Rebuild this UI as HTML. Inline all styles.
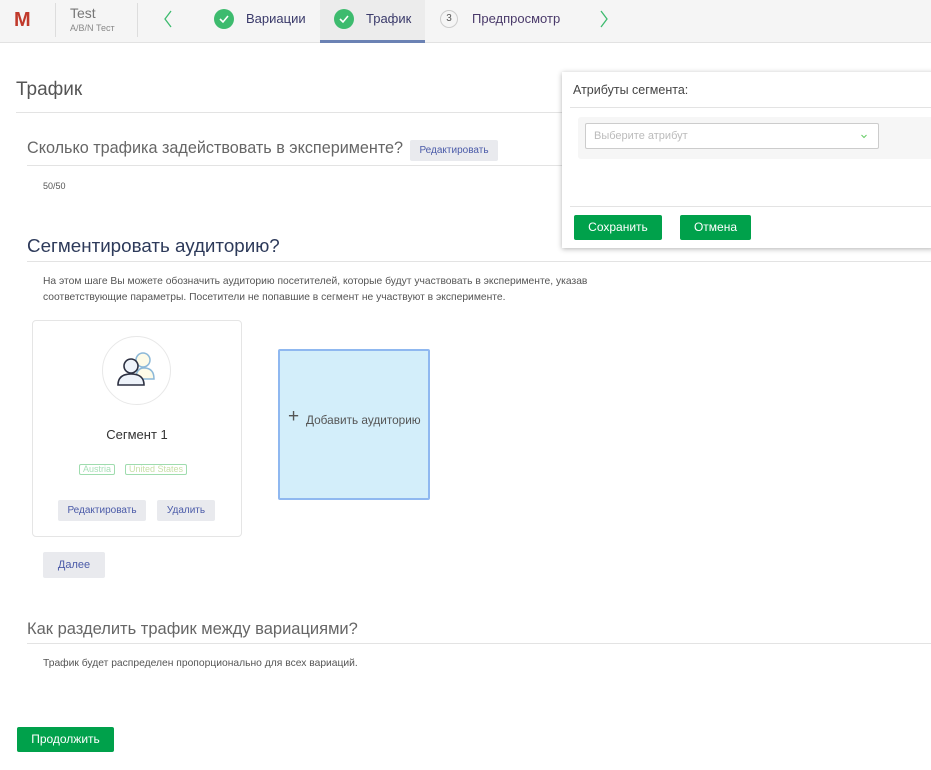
<!DOCTYPE html>
<html><head><meta charset="utf-8"><style>
*{box-sizing:border-box;margin:0;padding:0}
body{width:931px;height:770px;overflow:hidden;background:#fff;font-family:"Liberation Sans",sans-serif;color:#333;position:relative}
.a{position:absolute;white-space:nowrap}
.hdr{position:absolute;left:0;top:0;width:931px;height:43px;background:#f5f5f5;border-bottom:1px solid #e2e2e2}
.chk{position:absolute;width:20px;height:20px;border-radius:50%;background:#3dbb6e;top:9px}
.btn{position:absolute;background:#e9eaee;color:#4a5aa8;font-size:10px;text-align:center;border-radius:2px}
.g{position:absolute;background:#00a14b;color:#fff;font-size:12px;text-align:center;border-radius:2px}
.line{position:absolute;height:1px;background:#e3e3e3}
</style></head><body>
<div class="hdr">
 <div class="a" style="left:14px;top:9px;font-size:20px;font-weight:bold;color:#c0392b">M</div>
 <div class="a" style="left:55px;top:3px;width:1px;height:34px;background:#ddd"></div>
 <div class="a" style="left:70px;top:5px;font-size:14px;color:#777">Test</div>
 <div class="a" style="left:70px;top:23px;font-size:9px;color:#888">A/B/N Тест</div>
 <div class="a" style="left:137px;top:3px;width:1px;height:34px;background:#ddd"></div>
 <svg class="a" style="left:162px;top:9px" width="12" height="20"><path d="M9 2 L3 10 L9 18" stroke="#3dbb6e" stroke-width="1.3" fill="none"/></svg>
 <div class="chk" style="left:214px"><svg width="20" height="20"><path d="M6 10 L9 13 L14 7" stroke="#fff" stroke-width="1.6" fill="none"/></svg></div>
 <div class="a" style="left:246px;top:11px;font-size:13px;color:#3a3a6a">Вариации</div>
 <div class="a" style="left:320px;top:0;width:105px;height:43px;background:#ececec;border-bottom:3px solid #6b82b4"></div>
 <div class="chk" style="left:334px"><svg width="20" height="20"><path d="M6 10 L9 13 L14 7" stroke="#fff" stroke-width="1.6" fill="none"/></svg></div>
 <div class="a" style="left:366px;top:11px;font-size:13px;color:#3a3a6a">Трафик</div>
 <div class="a" style="left:440px;top:10px;width:18px;height:18px;border:1px solid #ccc;border-radius:50%;font-size:10px;text-align:center;line-height:16px;color:#555">3</div>
 <div class="a" style="left:472px;top:11px;font-size:13px;color:#4a3a6a">Предпросмотр</div>
 <svg class="a" style="left:598px;top:9px" width="12" height="20"><path d="M3 2 L9 10 L3 18" stroke="#3dbb6e" stroke-width="1.3" fill="none"/></svg>
</div>

<div class="a" style="left:16px;top:79px;font-size:19px;color:#555">Трафик</div>
<div class="line" style="left:16px;top:112px;width:560px"></div>
<div class="a" style="left:27px;top:139px;font-size:16.2px;color:#666">Сколько трафика задействовать в эксперименте?</div>
<div class="btn" style="left:410px;top:140px;width:88px;height:21px;line-height:21px">Редактировать</div>
<div class="line" style="left:27px;top:165px;width:904px"></div>
<div class="a" style="left:43px;top:181px;font-size:9px;color:#555">50/50</div>

<div class="a" style="left:27px;top:235px;font-size:18.8px;color:#2d3a5a">Сегментировать аудиторию?</div>
<div class="line" style="left:27px;top:261px;width:904px"></div>
<div class="a" style="left:43px;top:274px;font-size:10.3px;color:#555;line-height:16px">На этом шаге Вы можете обозначить аудиторию посетителей, которые будут участвовать в эксперименте, указав<br>соответствующие параметры. Посетители не попавшие в сегмент не участвуют в эксперименте.</div>

<div class="a" style="left:32px;top:320px;width:210px;height:217px;border:1px solid #e5e5e5;border-radius:4px"></div>
<div class="a" style="left:102px;top:336px;width:69px;height:69px;border:1px solid #e8e8e8;border-radius:50%"></div>
<svg class="a" style="left:114px;top:348px" width="46" height="40">
 <circle cx="29" cy="12" r="7" fill="#fdfbe8" stroke="#8cb8d8" stroke-width="1.5"/>
 <path d="M22 31 Q22 20 30 20 Q40 20 40 31 Z" fill="#fdfbe8" stroke="#8cb8d8" stroke-width="1.5"/>
 <circle cx="17" cy="18" r="7" fill="#eef3fa" stroke="#2d3142" stroke-width="1.6"/>
 <path d="M4 37 Q4 26 17 26 Q30 26 30 37 Z" fill="#eef3fa" stroke="#2d3142" stroke-width="1.6"/>
</svg>
<div class="a" style="left:32px;top:427px;width:210px;text-align:center;font-size:13px;color:#333">Сегмент 1</div>
<div class="a" style="left:79px;top:464px;font-size:9px;color:#a8e0b8;border:1px solid #9fdcae;border-radius:2px;padding:0 3px;line-height:9px">Austria</div>
<div class="a" style="left:125px;top:464px;font-size:9px;color:#c8e0a8;border:1px solid #9fdcae;border-radius:2px;padding:0 3px;line-height:9px">United States</div>
<div class="btn" style="left:58px;top:500px;width:88px;height:21px;line-height:21px">Редактировать</div>
<div class="btn" style="left:157px;top:500px;width:58px;height:21px;line-height:21px">Удалить</div>

<div class="a" style="left:278px;top:349px;width:152px;height:151px;background:#d3eefa;border:2px solid #8fb8f0;border-radius:2px"></div>
<div class="a" style="left:288px;top:406px;font-size:19px;color:#555">+</div>
<div class="a" style="left:306px;top:413px;font-size:11.8px;color:#555">Добавить аудиторию</div>

<div class="btn" style="left:43px;top:552px;width:62px;height:26px;line-height:26px;font-size:11px">Далее</div>

<div class="a" style="left:27px;top:620px;font-size:16.5px;color:#666">Как разделить трафик между вариациями?</div>
<div class="line" style="left:27px;top:643px;width:904px"></div>
<div class="a" style="left:43px;top:658px;font-size:10.3px;color:#555">Трафик будет распределен пропорционально для всех вариаций.</div>

<div class="g" style="left:17px;top:727px;width:97px;height:25px;line-height:25px">Продолжить</div>

<div class="a" style="left:562px;top:72px;width:372px;height:176px;background:#fff;box-shadow:0 1px 5px rgba(0,0,0,.3)">
 <div class="a" style="left:11px;top:11px;font-size:12.5px;color:#444">Атрибуты сегмента:</div>
 <div class="line" style="left:8px;top:35px;width:364px"></div>
 <div class="a" style="left:16px;top:45px;width:356px;height:42px;background:#f6f6f6;border-radius:3px"></div>
 <div class="a" style="left:23px;top:51px;width:294px;height:26px;background:#fff;border:1px solid #ccc;border-radius:2px">
  <div class="a" style="left:8px;top:6px;font-size:11px;color:#bbb">Выберите атрибут</div>
  <svg class="a" style="left:275px;top:10px" width="6" height="5"><path d="M0.5 1 L3 3.5 L5.5 1" stroke="#6c6" fill="none"/></svg>
 </div>
 <div class="line" style="left:8px;top:134px;width:364px"></div>
 <div class="g" style="left:12px;top:143px;width:88px;height:25px;line-height:25px">Сохранить</div>
 <div class="g" style="left:118px;top:143px;width:71px;height:25px;line-height:25px">Отмена</div>
</div>
</body></html>
